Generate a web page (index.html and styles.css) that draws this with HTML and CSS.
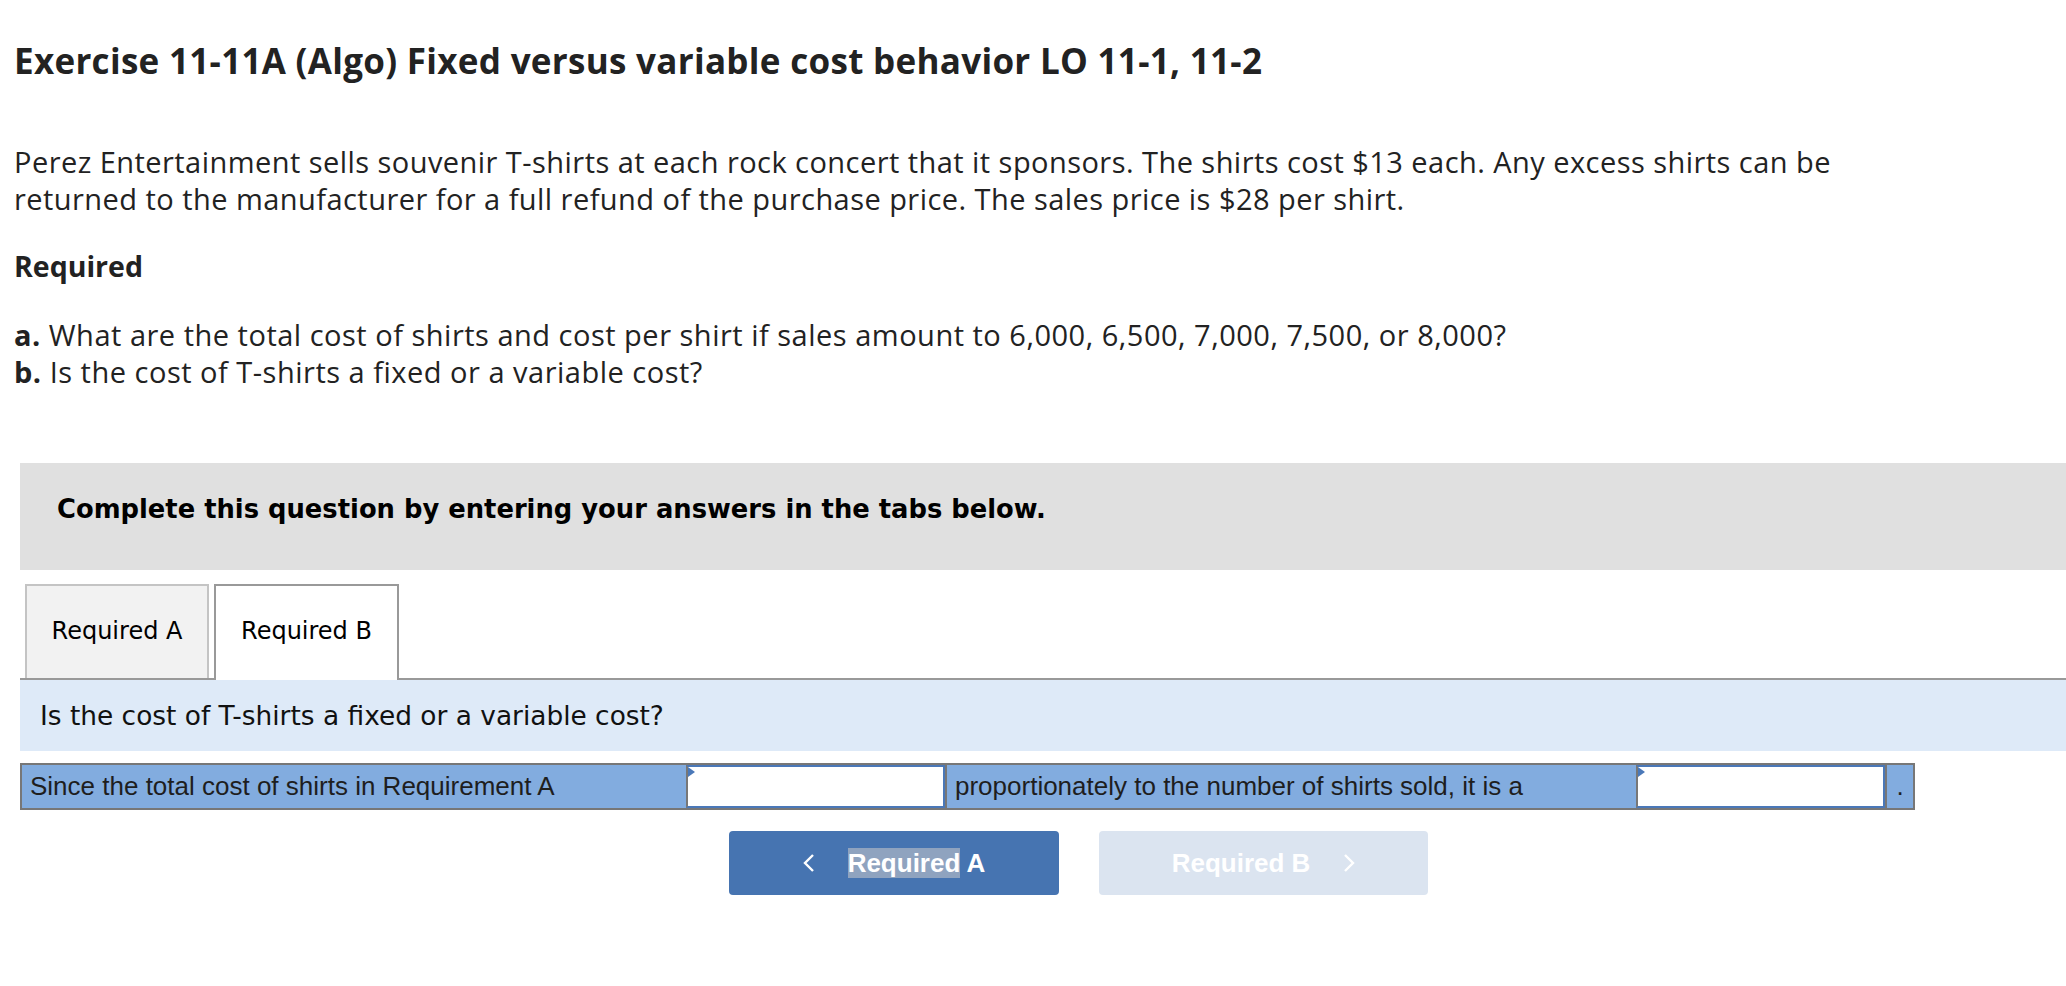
FILE: index.html
```html
<!DOCTYPE html>
<html lang="en">
<head>
<meta charset="utf-8">
<title>Exercise 11-11A (Algo)</title>
<link rel="stylesheet" href="styles.css">
</head>
<body>
<div class="page">
  <h1 class="title">Exercise 11-11A (Algo) Fixed versus variable cost behavior LO 11-1, 11-2</h1>
  <p class="intro">Perez Entertainment sells souvenir T-shirts at each rock concert that it sponsors. The shirts cost $13 each. Any excess shirts can be returned to the manufacturer for a full refund of the purchase price. The sales price is $28 per shirt.</p>
  <h2 class="req-head">Required</h2>
  <div class="parts">
    <div class="part"><b>a.</b> What are the total cost of shirts and cost per shirt if sales amount to 6,000, 6,500, 7,000, 7,500, or 8,000?</div>
    <div class="part"><b>b.</b> Is the cost of T-shirts a fixed or a variable cost?</div>
  </div>

  <section class="qbox">
    <div class="notice">Complete this question by entering your answers in the tabs below.</div>
    <div class="tabs">
      <div class="tab">Required A</div>
      <div class="tab active">Required B</div>
    </div>
    <div class="prompt">Is the cost of T-shirts a fixed or a variable cost?</div>
    <div class="answer-row">
      <div class="cell text">Since the total cost of shirts in Requirement A</div>
      <div class="cell input"><span class="flag"></span></div>
      <div class="cell text">proportionately to the number of shirts sold, it is a</div>
      <div class="cell input"><span class="flag"></span></div>
      <div class="cell dot">.</div>
    </div>
    <div class="nav">
      <div class="btn prev">
        <svg class="chev" viewBox="0 0 12 20" width="12" height="20"><polyline points="10,2 2,10 10,18" fill="none" stroke="#fff" stroke-width="2.4"/></svg>
        <span class="btn-label"><span class="sel">Required</span> A</span>
      </div>
      <div class="btn next">
        <span class="btn-label">Required B</span>
        <svg class="chev" viewBox="0 0 12 20" width="12" height="20"><polyline points="2,2 10,10 2,18" fill="none" stroke="#fff" stroke-width="2.4"/></svg>
      </div>
    </div>
  </section>
</div>
</body>
</html>
```

FILE: styles.css
```css
html, body {
  margin: 0;
  padding: 0;
  background: #ffffff;
}

.page {
  padding-left: 14px;
  overflow: hidden;
}

.title {
  margin: 41px 0 0 0;
  font-family: "Open Sans", "Liberation Sans", sans-serif;
  font-weight: 700;
  font-size: 35px;
  letter-spacing: 0.3px;
  line-height: 40px;
  color: #222222;
}

.intro {
  margin: 62px 0 0 0;
  max-width: 1860px;
  font-family: "Open Sans", "Liberation Sans", sans-serif;
  font-size: 29px;
  letter-spacing: 0.45px;
  line-height: 37px;
  color: #222222;
}

.req-head {
  margin: 31px 0 0 0;
  font-family: "Open Sans", "Liberation Sans", sans-serif;
  font-weight: 700;
  font-size: 28.5px;
  line-height: 36px;
  color: #222222;
}

.parts {
  margin-top: 32px;
  font-family: "Open Sans", "Liberation Sans", sans-serif;
  font-size: 29px;
  letter-spacing: 0.5px;
  line-height: 37px;
  color: #222222;
}

.qbox {
  margin: 73px 0 0 6px;
  font-family: "DejaVu Sans", Verdana, sans-serif;
}

.notice {
  background: #e0e0e0;
  height: 107px;
  box-sizing: border-box;
  padding: 30px 0 0 37px;
  font-weight: 700;
  font-size: 25.8px;
  line-height: 32px;
  color: #000000;
}

.tabs {
  margin-top: 14px;
  display: flex;
  gap: 5px;
  padding-left: 5px;
  border-bottom: 2px solid #999999;
  height: 94px;
}

.tab {
  width: 184px;
  height: 94px;
  box-sizing: border-box;
  border: 2px solid #c4c4c4;
  border-bottom: none;
  background: #f2f2f2;
  display: flex;
  align-items: center;
  justify-content: center;
  padding-bottom: 2px;
  font-size: 24px;
  color: #000000;
}

.tab.active {
  width: 185px;
  height: 96px;
  border-color: #999999;
  background: #ffffff;
  padding-bottom: 4px;
}

.prompt {
  background: #deeaf8;
  height: 71px;
  box-sizing: border-box;
  padding: 20px 0 0 20px;
  font-size: 26.4px;
  line-height: 32px;
  color: #111111;
}

.answer-row {
  margin-top: 12px;
  width: 1895px;
  height: 47px;
  box-sizing: border-box;
  display: grid;
  grid-template-columns: 664px 261px 689px 251px 1fr;
  border: 2px solid #777777;
  background: #777777;
  font-family: "Liberation Sans", Arial, sans-serif;
  font-size: 26px;
  color: #1e1e1e;
}

.cell {
  box-sizing: border-box;
  display: flex;
  align-items: center;
}

.cell.text {
  background: #82acdf;
  padding-left: 8px;
}

.cell.text + .cell.input {
  border-left: 2px solid #777777;
}

.cell.input {
  position: relative;
  background: #ffffff;
  border: 2px solid #4a78b8;
  margin-right: 2px;
}

.flag {
  position: absolute;
  left: 0;
  top: 0;
  width: 0;
  height: 0;
  border-top: 5px solid transparent;
  border-bottom: 5px solid transparent;
  border-left: 7px solid #4a78b8;
}

.cell.dot {
  background: #82acdf;
  justify-content: center;
}

.nav {
  margin-top: 21px;
  display: flex;
  gap: 40px;
  padding-left: 709px;
}

.btn {
  width: 330px;
  height: 64px;
  box-sizing: border-box;
  border-radius: 4px;
  display: flex;
  align-items: center;
  justify-content: center;
  gap: 33px;
  font-family: "Liberation Sans", Arial, sans-serif;
  font-weight: 700;
  font-size: 26px;
  color: #ffffff;
}

.btn.prev {
  background: #4674b1;
}

.btn.next {
  width: 329px;
  background: #dbe4f0;
}

.chev {
  display: block;
}

.btn-label {
  line-height: 30px;
}

.sel {
  background: #8fa3bf;
}
```
